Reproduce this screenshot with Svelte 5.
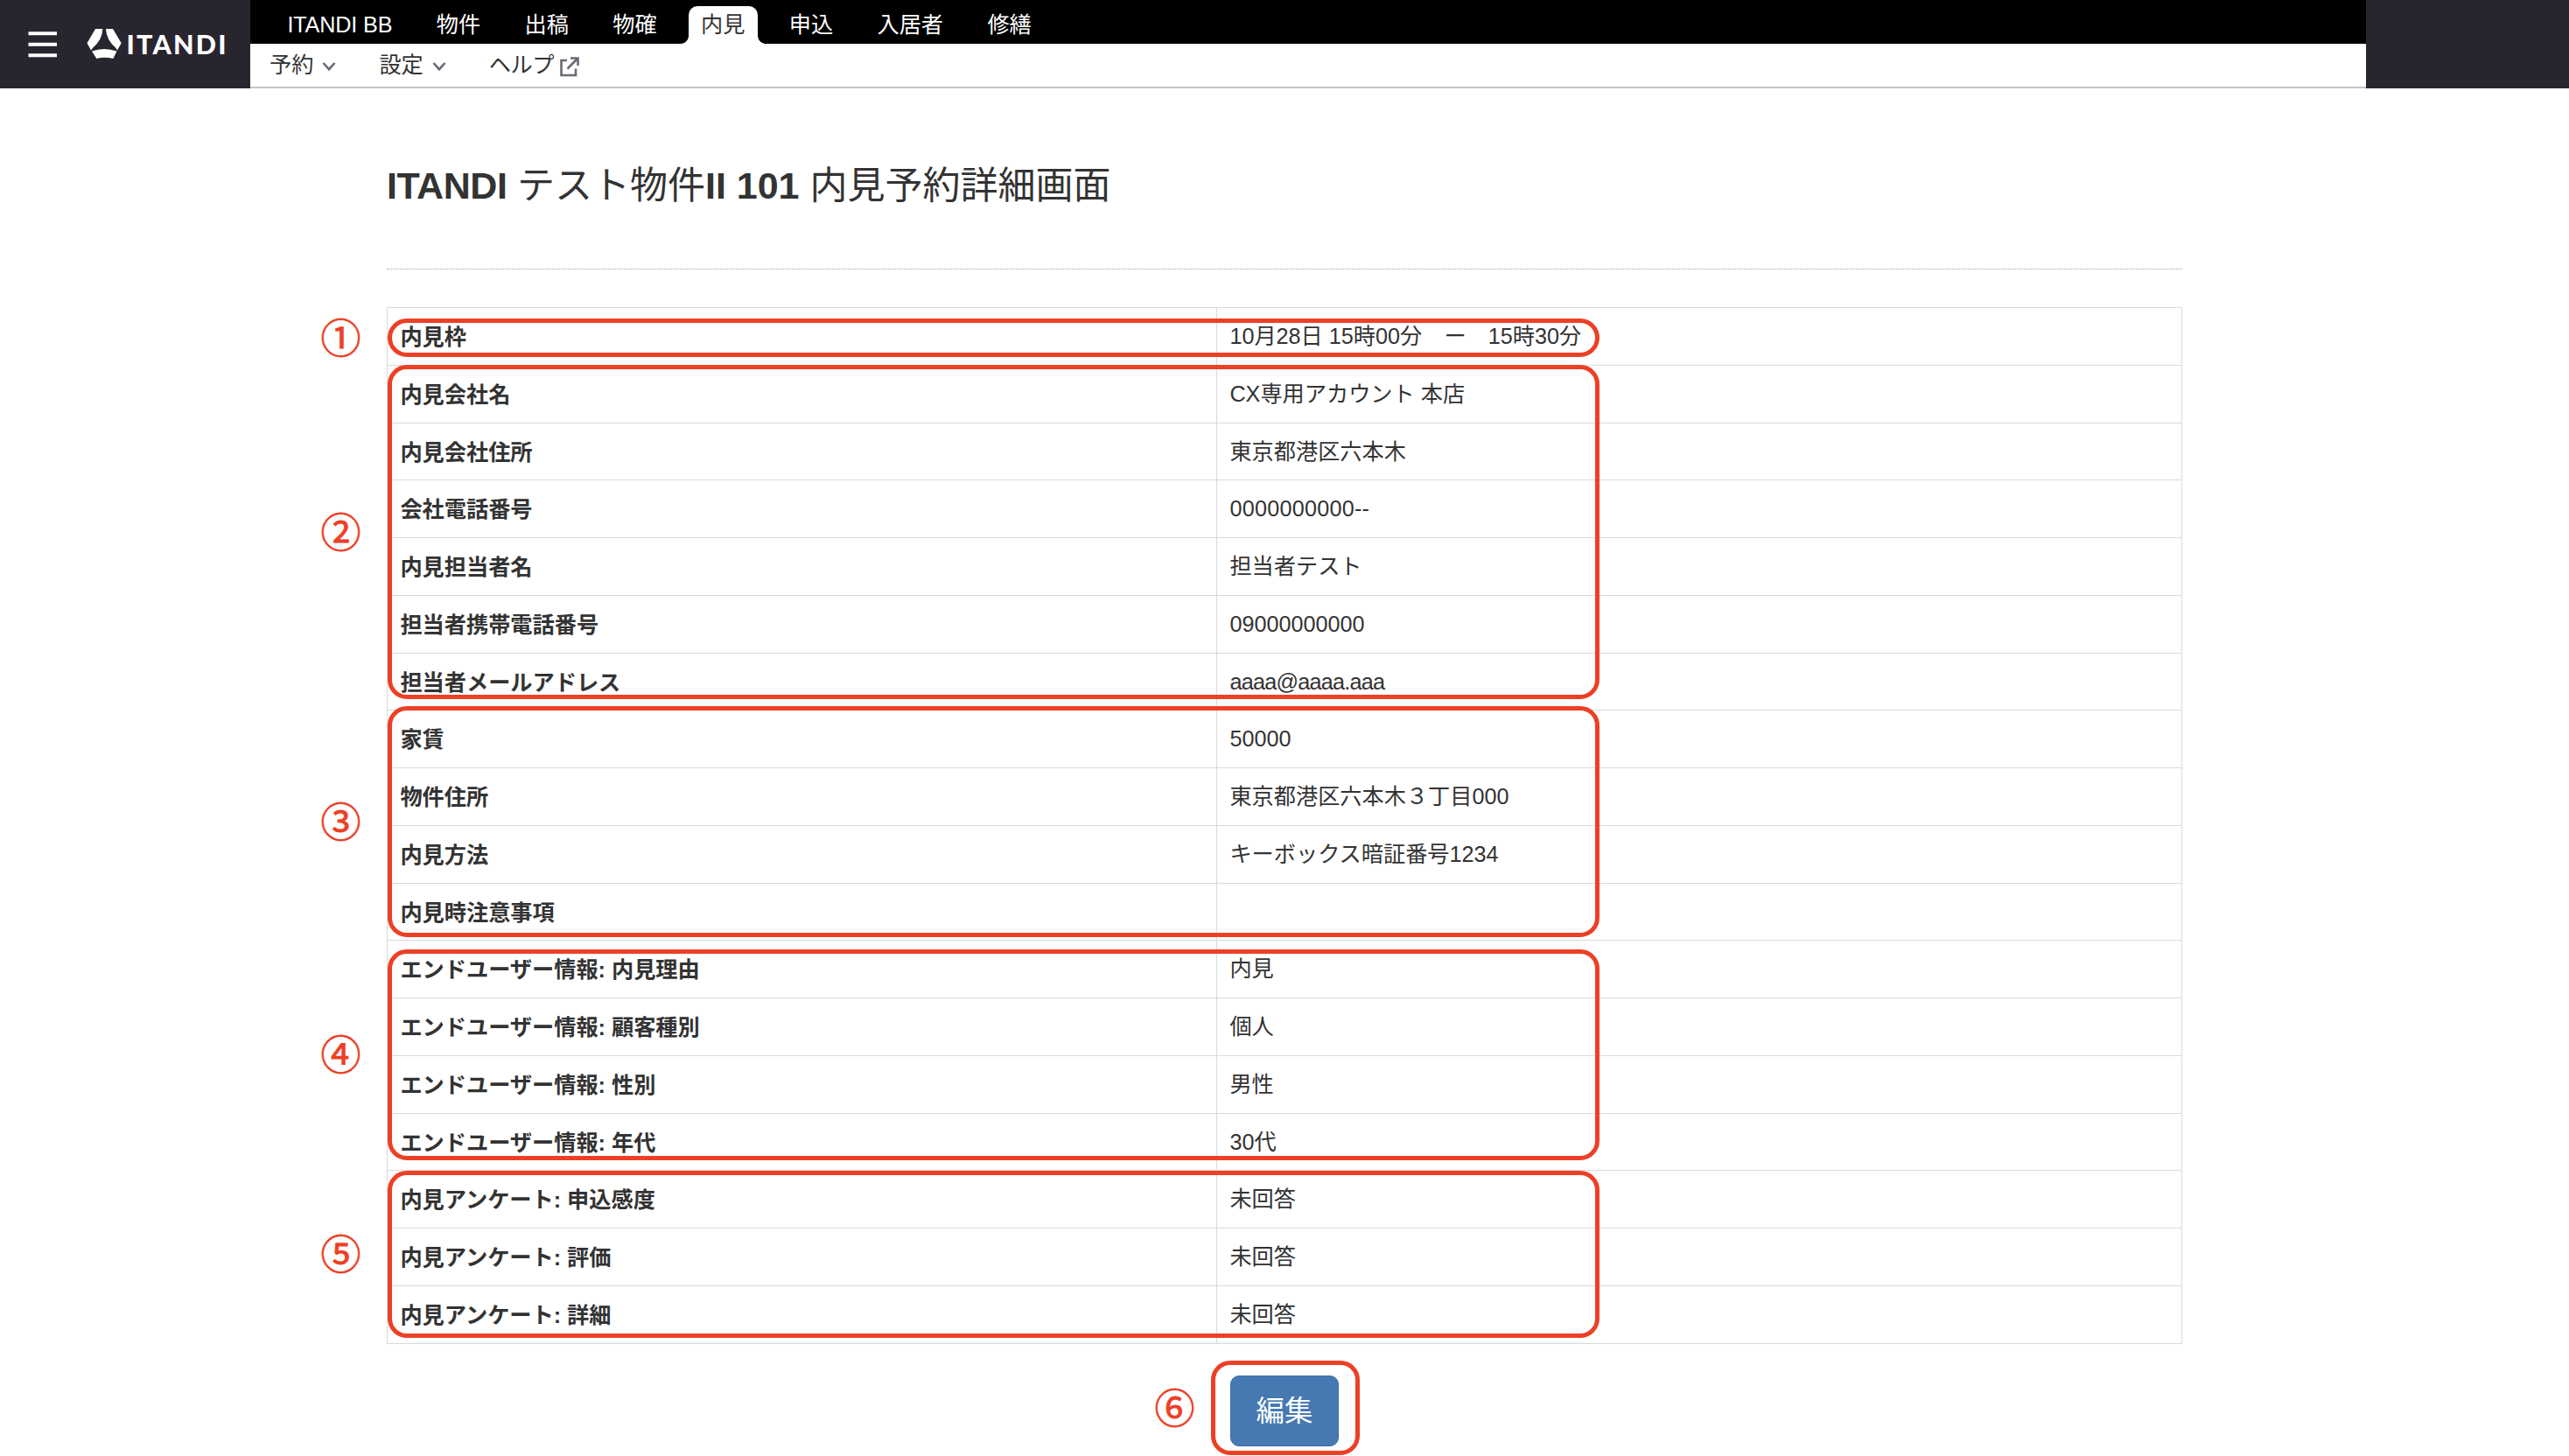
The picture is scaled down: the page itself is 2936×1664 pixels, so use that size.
<script lang="ts">
    const services = ["ITANDI BB", "物件", "出稿", "物確", "内見", "申込", "入居者", "修繕"];
    const activeService = "内見";

    const rows: { label: string, value: string }[] = [
        { label: "内見枠", value: "10月28日 15時00分　ー　15時30分" },
        { label: "内見会社名", value: "CX専用アカウント 本店" },
        { label: "内見会社住所", value: "東京都港区六本木" },
        { label: "会社電話番号", value: "0000000000--" },
        { label: "内見担当者名", value: "担当者テスト" },
        { label: "担当者携帯電話番号", value: "09000000000" },
        { label: "担当者メールアドレス", value: "aaaa@aaaa.aaa" },
        { label: "家賃", value: "50000" },
        { label: "物件住所", value: "東京都港区六本木３丁目000" },
        { label: "内見方法", value: "キーボックス暗証番号1234" },
        { label: "内見時注意事項", value: "" },
        { label: "エンドユーザー情報: 内見理由", value: "内見" },
        { label: "エンドユーザー情報: 顧客種別", value: "個人" },
        { label: "エンドユーザー情報: 性別", value: "男性" },
        { label: "エンドユーザー情報: 年代", value: "30代" },
        { label: "内見アンケート: 申込感度", value: "未回答" },
        { label: "内見アンケート: 評価", value: "未回答" },
        { label: "内見アンケート: 詳細", value: "未回答" },
    ];

    // frames and numbers laid over the table
    const notes = [
        { mark: "①", markX: 389.5, markY: 382.7, x: 443, y: 364, w: 1385, h: 44 },
        { mark: "②", markX: 389.5, markY: 604.7, x: 443, y: 417, w: 1385, h: 382 },
        { mark: "③", markX: 389.5, markY: 936, x: 443, y: 807, w: 1385, h: 264 },
        { mark: "④", markX: 389.5, markY: 1201.7, x: 443, y: 1085, w: 1385, h: 241 },
        { mark: "⑤", markX: 389.5, markY: 1430, x: 443, y: 1338, w: 1385, h: 191 },
        { mark: "⑥", markX: 1342.5, markY: 1606, x: 1384, y: 1555, w: 170, h: 108 },
    ];
</script>

{#snippet chevron()}
    <svg class="chevron" viewBox="0 0 16 12" width="16" height="12">
        <path d="M1.5 2 L8 9.2 L14.5 2" />
    </svg>
{/snippet}

<div class="page">
    <header>
        <div class="brand">
            <svg class="burger" viewBox="0 0 34 30" width="34" height="30">
                <path d="M0.5 2.3 H33 M0.5 14.8 H33 M0.5 27.2 H33" />
            </svg>
            <svg class="logo" viewBox="0 0 162 36" width="162" height="36">
                <path d="M10 1 H18.3 Q18 13.500 7 22.700 L5 25.500 L0.500 17.300 Z" />
                <path d="M22 1 H30 L39.700 17.300 L35 25.500 L33.300 22.700 Q22.500 13.500 22 1 Z" />
                <path d="M6 26.500 Q20 21.500 34.500 26.500 L30.300 35 Q20.500 32.500 11.300 35 Z" />
                <text x="45.5" y="30" textLength="114" lengthAdjust="spacing">ITANDI</text>
            </svg>
        </div>
        <div class="menus">
            <nav class="services">
                {#each services as service}
                    <a class:active={service === activeService} class:latin={service === "ITANDI BB"}>{service}</a>
                {/each}
            </nav>
            <nav class="sub">
                <a>予約{@render chevron()}</a>
                <a>設定{@render chevron()}</a>
                <a class="help">
                    ヘルプ<svg class="external" viewBox="0 0 24 24" width="24" height="24">
                        <path d="M9 5 H2.500 V22 H19 V14.500 M13 2.500 H21.500 V11 M21 3 L9.500 14.500" />
                    </svg>
                </a>
            </nav>
        </div>
        <div class="account"></div>
    </header>

    <main>
        <h1><span class="name">{"ITANDI "}</span>テスト物件<span>{"II 101 "}</span>内見予約詳細画面</h1>
        <div class="rule"></div>
        <div class="table">
            {#each rows as row}
                <div class="row">
                    <div class="label">{row.label}</div>
                    <div class="value" class:email={row.value.includes("@")} class:phone={row.value.endsWith("--")}>{row.value}</div>
                </div>
            {/each}
        </div>
        <button class="edit">編集</button>
    </main>

    {#each notes as note}
        <div class="frame" style="left: {note.x}px; top: {note.y}px; width: {note.w}px; height: {note.h}px"></div>
        <div class="mark" style="left: {note.markX}px; top: {note.markY}px">{note.mark}</div>
    {/each}
</div>

<style>
    :global(body) {
        background: #fff;
    }

    .page {
        position: relative;
        height: 1664px;
        overflow: hidden;
        color: #333;
        font: 25.2px/1.4 "Liberation Sans", "Noto Sans CJK JP", sans-serif;
    }

    header {
        display: flex;
        height: 101px;
    }

    .brand {
        display: flex;
        align-items: flex-start;
        box-sizing: border-box;
        width: 286px;
        padding-left: 32px;
        background: #28252f;
    }

    .burger {
        margin-top: 36px;
    }

    .burger path {
        stroke: #fff;
        stroke-width: 4;
    }

    .logo {
        margin: 32px 0 0 32.5px;
        overflow: visible;
        fill: #fff;
    }

    .logo text {
        font: 900 30.5px Lato, sans-serif;
    }

    .menus {
        flex: 1;
    }

    .account {
        width: 232px;
        background: #28252f;
    }

    .services {
        display: flex;
        align-items: flex-end;
        gap: 21.6px;
        height: 50px;
        padding-left: 28px;
        background: #000;
    }

    .services a {
        position: relative;
        height: 43px;
        padding: 0 14.4px;
        line-height: 42px;
        color: #fff;
    }

    .services .latin {
        letter-spacing: -0.15px;
    }

    .services .active {
        border-radius: 10px 10px 0 0;
        background: #fff;
        color: #333;
    }

    .active::before,
    .active::after {
        content: "";
        position: absolute;
        bottom: 0;
        width: 9px;
        height: 9px;
    }

    .active::before {
        right: 100%;
        background: radial-gradient(circle at 0 0, transparent 8.5px, #fff 9.2px);
    }

    .active::after {
        left: 100%;
        background: radial-gradient(circle at 100% 0, transparent 8.5px, #fff 9.2px);
    }

    .sub {
        display: flex;
        align-items: center;
        gap: 49px;
        height: 49px;
        padding-left: 22px;
        border-bottom: 2px solid #c5c4cb;
    }

    .sub a {
        display: flex;
        align-items: center;
        white-space: nowrap;
    }

    .sub .help {
        letter-spacing: -0.5px;
    }

    .chevron {
        margin: 2px 0 0 10px;
    }

    .chevron path,
    .external path {
        fill: none;
        stroke: #6b6875;
        stroke-width: 2.6;
    }

    .external {
        margin: 3px 0 0 6px;
    }

    main {
        width: 2052px;
        margin-left: 442px;
    }

    h1 {
        margin: 0;
        padding-top: 81px;
        font-size: 43px;
        font-weight: 400;
        line-height: 60px;
    }

    h1 span {
        font-weight: 700;
        white-space: pre;
    }

    .name {
        letter-spacing: -0.45px;
    }

    .rule {
        margin: 65px 0 43px;
        border-top: 1px dotted #a0a0a0;
    }

    .table {
        border: 1px solid #dadada;
        border-bottom: 0;
    }

    .row {
        display: flex;
        box-sizing: border-box;
        height: 65.78px;
        border-bottom: 1px solid #dadada;
        line-height: 66px;
    }

    .label {
        box-sizing: border-box;
        width: 948px;
        padding-left: 14.4px;
        border-right: 1px solid #dadada;
        font-weight: 700;
    }

    .row > div {
        height: 100%;
    }

    .value {
        padding-left: 14.4px;
        line-height: 65px;
    }

    .email {
        letter-spacing: -0.75px;
    }

    .phone {
        letter-spacing: 0.25px;
    }

    .edit {
        display: block;
        width: 124px;
        height: 81px;
        margin: 36px 0 0 964px;
        padding: 0 0 6px;
        border: 1px solid #3d6ea8;
        border-radius: 10px;
        background: #4679b2;
        color: #fff;
        font: 32.4px "Liberation Sans", "Noto Sans CJK JP", sans-serif;
    }

    .frame {
        position: absolute;
        box-sizing: border-box;
        border: 5px solid #ec4026;
        border-radius: 22px;
    }

    .mark {
        position: absolute;
        transform: translate(-50%, -50%);
        color: #ec4026;
        font: 46px/1 "Noto Sans CJK JP", sans-serif;
        -webkit-text-stroke: 0.8px #ec4026;
    }
</style>
